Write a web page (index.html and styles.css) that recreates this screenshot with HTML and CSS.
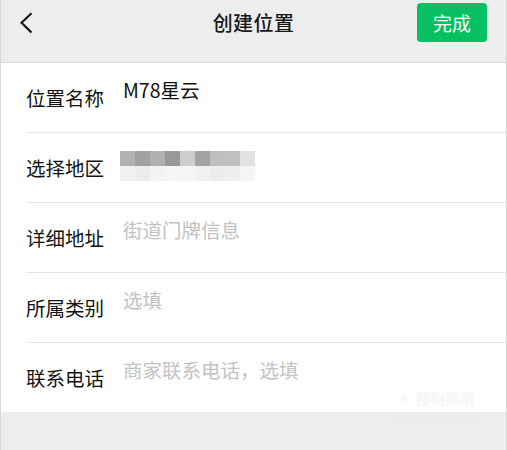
FILE: index.html
```html
<!DOCTYPE html>
<html lang="zh-CN">
<head>
  <meta charset="UTF-8" />
  <meta name="viewport" content="width=device-width, initial-scale=1.0" />
  <title>创建位置</title>
  <link rel="stylesheet" href="styles.css">
</head>
<body>
  <div class="page">
    <header class="nav">
      <div class="nav-bar">
        <button class="back" aria-label="返回">
          <svg width="13" height="22" viewBox="0 0 13 22"><path d="M11.5 1.2 L1.5 10.8 L11.5 20.6" fill="none" stroke="#111" stroke-width="2.1"/></svg>
        </button>
        <h1>创建位置</h1>
        <button class="done">完成</button>
      </div>
    </header>

    <ul class="form">
      <li class="row"><span class="label">位置名称</span><span class="value">M78星云</span></li>
      <li class="row">
        <span class="label">选择地区</span>
        <span class="mosaic">
          <i style="background:#b1b1b1"></i><i style="background:#a1a1a1"></i><i style="background:#b0b0b0"></i><i style="background:#999"></i><i style="background:#cdcdcd"></i><i style="background:#a3a3a3"></i><i style="background:#bfbfbf"></i><i style="background:#c0c0c0"></i><i style="background:#e2e2e2"></i>
          <i style="background:#f0f0f0"></i><i style="background:#ececec"></i><i style="background:#f3f3f3"></i><i style="background:#f6f6f6"></i><i style="background:#f5f5f5"></i><i style="background:#f1f1f1"></i><i style="background:#ececec"></i><i style="background:#efefef"></i><i style="background:#f5f5f5"></i>
        </span>
      </li>
      <li class="row"><span class="label">详细地址</span><span class="value hint">街道门牌信息</span></li>
      <li class="row"><span class="label">所属类别</span><span class="value hint">选填</span></li>
      <li class="row"><span class="label">联系电话</span><span class="value hint">商家联系电话，选填</span></li>
    </ul>

    <div class="footer">
      <div class="mark">
        <div class="mark-top"><span class="mark-s">S</span>搜狗指南</div>
        <div class="mark-url">zhinan.sogou.com</div>
      </div>
    </div>
  </div>
</body>
</html>
```

FILE: styles.css
```css
*{box-sizing:border-box;margin:0;padding:0}
body{font-family:"Noto Sans CJK SC","Liberation Sans",sans-serif;background:#ededed;color:#111}
.page{min-height:100vh;display:flex;flex-direction:column;border-left:1px solid #d6d6d6;border-right:1px solid #d6d6d6;position:relative}

/* nav */
.nav{height:63px;padding-bottom:17px;background:#ededed;border-bottom:1px solid #dadada}
.nav-bar{height:45px;display:grid;grid-template-columns:1fr auto 1fr;align-items:center}
.back{justify-self:start;margin-left:19px;width:14px;height:24px;border:none;background:none;display:flex;align-items:center;cursor:pointer}
.nav h1{font-size:20px;font-weight:500;color:#191919;line-height:1;letter-spacing:.4px}
.done{justify-self:end;margin-right:19px;width:70px;height:39px;border:none;border-radius:4px;background:#07c160;color:#fff;font-family:inherit;font-size:19px;cursor:pointer}

/* form */
.form{list-style:none;background:#fff}
.row{margin-left:25px;height:70px;display:flex;align-items:center;border-bottom:1px solid #e6e6e6}
.row:last-child{border-bottom:none;height:69px}
.label{width:97px;flex:none;font-size:19.5px;line-height:1;padding-top:1px}
.value{font-size:19.5px;line-height:1;margin-bottom:16px}
.hint{color:#c2c2c2}
.mosaic{display:grid;grid-template-columns:repeat(9,15px);grid-template-rows:15px 15px;margin-left:-3px;margin-bottom:4px}

/* bottom */
.footer{flex:1;background:#ededed}
.mark{position:absolute;right:23px;bottom:26px;color:rgba(255,255,255,.75);text-shadow:0 0 1px rgba(0,0,0,.12);display:flex;flex-direction:column;align-items:center}
.mark-top{font-size:14.5px;line-height:1;display:flex;align-items:center;gap:4px}
.mark-s{width:16px;height:16px;border:2px solid rgba(255,255,255,.75);border-radius:50%;font-size:10px;font-weight:bold;display:flex;align-items:center;justify-content:center;font-family:"Liberation Sans",sans-serif}
.mark-url{margin-top:9px;font-size:8px;font-weight:bold;letter-spacing:1.6px;font-family:"Liberation Sans",sans-serif}
```
